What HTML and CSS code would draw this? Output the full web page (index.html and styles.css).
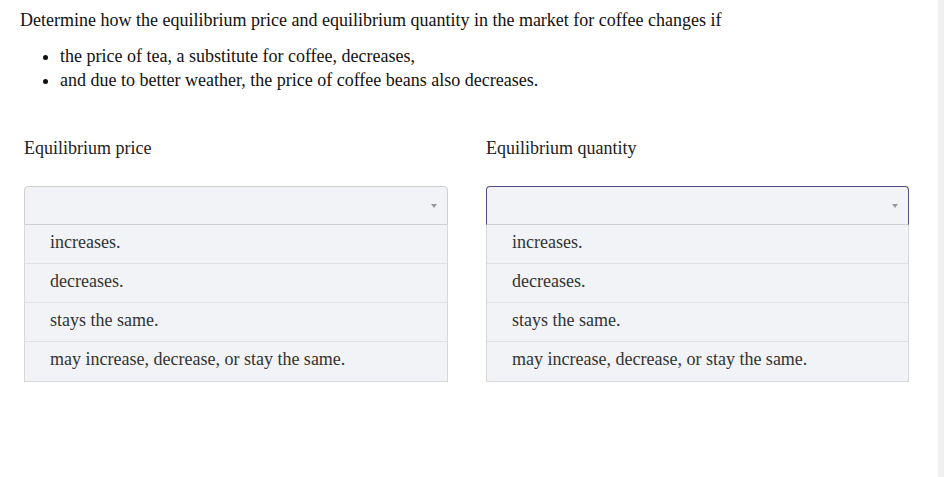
FILE: index.html
```html
<!DOCTYPE html>
<html lang="en">
<head>
<meta charset="utf-8">
<title>Equilibrium</title>
<link rel="stylesheet" href="styles.css">
</head>
<body>
<main class="page">
  <p class="intro">Determine how the equilibrium price and equilibrium quantity in the market for coffee changes if</p>
  <ul class="conditions">
    <li>the price of tea, a substitute for coffee, decreases,</li>
    <li>and due to better weather, the price of coffee beans also decreases.</li>
  </ul>
  <div class="answers">
    <div class="answer">
      <div class="label">Equilibrium price</div>
      <div class="select"><span class="arrow"></span></div>
      <ul class="options">
        <li>increases.</li>
        <li>decreases.</li>
        <li>stays the same.</li>
        <li>may increase, decrease, or stay the same.</li>
      </ul>
    </div>
    <div class="answer">
      <div class="label">Equilibrium quantity</div>
      <div class="select focused"><span class="arrow"></span></div>
      <ul class="options">
        <li>increases.</li>
        <li>decreases.</li>
        <li>stays the same.</li>
        <li>may increase, decrease, or stay the same.</li>
      </ul>
    </div>
  </div>
</main>
<div class="scrollbar"></div>
</body>
</html>
```

FILE: styles.css
```css
html, body {
  margin: 0;
  padding: 0;
  background: #fff;
}
body {
  display: flex;
  min-height: 100vh;
  font-family: "Liberation Serif", "Times New Roman", serif;
  font-size: 18px;
  color: #111;
}
.page {
  flex: 1;
  padding: 8px 0 0 20px;
}
.intro {
  margin: 0;
  line-height: 24px;
}
.conditions {
  margin: 12px 0 0 0;
  padding-left: 40px;
  line-height: 24px;
}
.answers {
  display: grid;
  grid-template-columns: 424px 423px;
  column-gap: 38px;
  margin: 44px 0 0 4px;
}
.label {
  line-height: 24px;
  color: #222;
  margin-bottom: 26px;
}
.select {
  height: 37px;
  border: 1px solid #cfcfd4;
  border-radius: 4px 4px 0 0;
  background: #f2f3f6;
  display: flex;
  align-items: center;
  justify-content: flex-end;
  padding-right: 10px;
}
.select.focused {
  border-color: #544d8c;
  border-bottom-color: #cfcfd4;
}
.arrow {
  width: 0;
  height: 0;
  border-left: 3.5px solid transparent;
  border-right: 3.5px solid transparent;
  border-top: 4px solid #9a9a9e;
  margin-top: 1px;
}
.options {
  list-style: none;
  margin: 0;
  padding: 0;
  border: 1px solid #d6d6db;
  border-top: none;
  background: #f2f3f6;
}
.options li {
  height: 38px;
  line-height: 35px;
  padding-left: 25px;
  color: #333;
  border-top: 1px solid #e0e0e5;
}
.options li:first-child {
  border-top: none;
}
.options li:last-child {
  height: 39px;
}
.scrollbar {
  width: 6px;
  background: #f1f1f1;
  flex: none;
}
```
